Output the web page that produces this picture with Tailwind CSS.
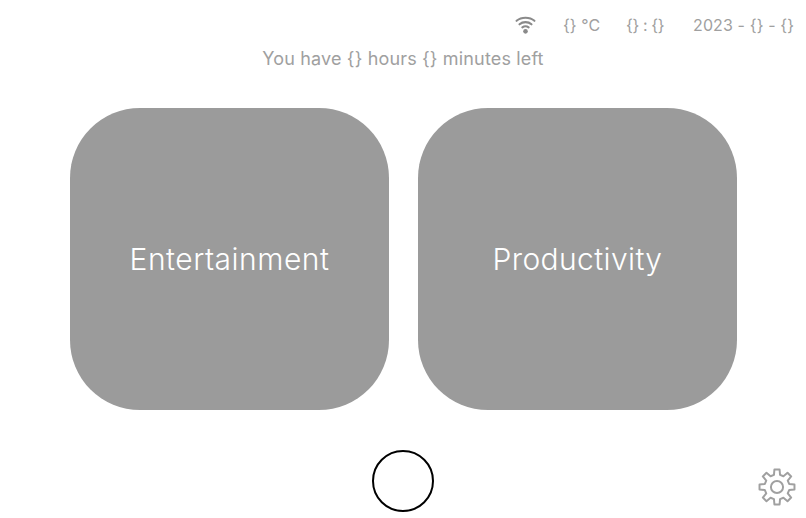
<!DOCTYPE html>
<html lang="en">
<head>
    <meta charset="UTF-8">
    <meta name="viewport" content="width=device-width, initial-scale=1.0">
    <script src="https://cdn.jsdelivr.net/npm/@tailwindcss/browser@4"></script>
    <title>Home</title>
</head>
<body class="bg-white font-['Inter',sans-serif] overflow-hidden">
    <div class="relative w-[806px] h-[518px]">
        <header class="flex items-center h-[49px] pl-[515px] text-[16px] text-[#a0a0a0]">
            <svg class="w-[21px] h-[21px] mr-[27px]" viewBox="0 0 20 20" fill="none" stroke="#8a8a8a" stroke-width="2" stroke-linecap="round">
                <path d="M1.500 6.500C6 2.500 14 2.500 18.500 6.500"/>
                <path d="M4.300 9.800C7.500 7 12.500 7 15.700 9.800"/>
                <path d="M7 12.800C8.800 11.400 11.200 11.400 13 12.800"/>
                <circle cx="10" cy="16.500" r="2.200" fill="#8a8a8a" stroke="none"/>
            </svg>
            <span class="w-[63px] tracking-[0.05px]">{} °C</span>
            <span class="w-[67px] tracking-[-0.4px]">{} : {}</span>
            <span class="tracking-[0.12px]">2023 - {} - {}</span>
        </header>
        <p class="mt-[1px] text-center text-[18px] leading-[18px] tracking-[0.15px] text-[#a0a0a0]">You have {} hours {} minutes left</p>
        <main class="flex justify-center gap-[29px] mt-[40px] pl-[1px]">
            <button class="w-[319px] h-[302px] rounded-[70px] bg-[#9b9b9b] text-white text-[30px] font-light tracking-[0.5px]">Entertainment</button>
            <button class="w-[319px] h-[302px] rounded-[70px] bg-[#9b9b9b] text-white text-[30px] font-light tracking-[0.38px]">Productivity</button>
        </main>
        <div class="flex justify-center mt-[40px]">
            <button class="w-[62px] h-[62px] rounded-full border-2 border-black bg-white" aria-label="Home"></button>
        </div>
        <svg class="absolute left-[758px] top-[468px] w-[38px] h-[38px]" viewBox="-12.500 -12.500 25 25" fill="none" stroke="#a0a0a0" stroke-width="1.300" stroke-linejoin="round">
            <path d="M-2-8-1.700-11.500H1.700L2-8 4.240-7.070 6.930-9.330 9.330-6.930 7.070-4.240 8-2 11.500-1.700V1.700L8 2 7.070 4.240 9.330 6.930 6.930 9.330 4.240 7.070 2 8 1.700 11.500H-1.700L-2 8-4.240 7.070-6.930 9.330-9.330 6.930-7.070 4.240-8 2-11.500 1.700V-1.700L-8-2-7.070-4.240-9.330-6.930-6.930-9.330-4.240-7.070Z"/>
            <circle cx="0" cy="0" r="4"/>
        </svg>
    </div>
</body>
</html>
